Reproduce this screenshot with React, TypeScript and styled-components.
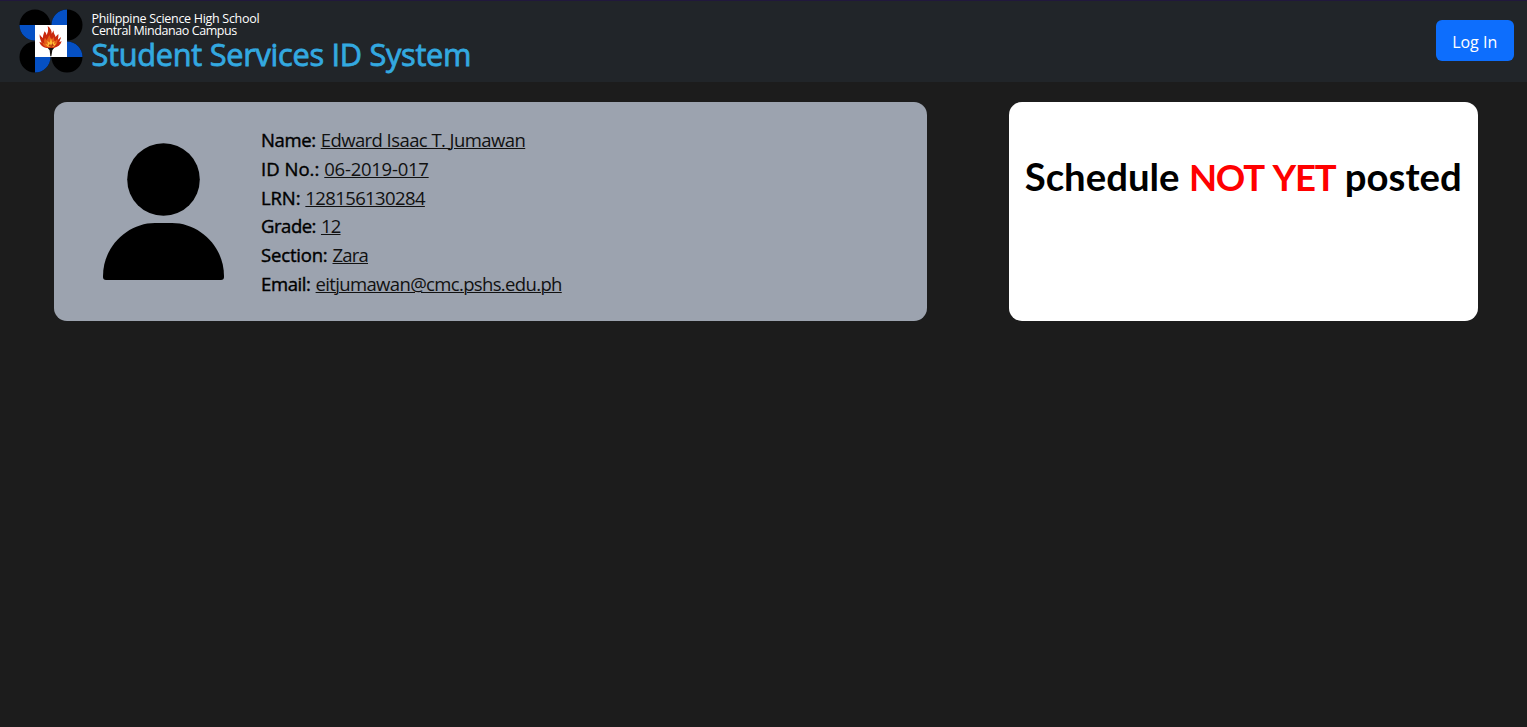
import styled, { createGlobalStyle } from "styled-components";

interface TextProps {
	$spacing?: string;
}

const details = [
	{ label: "Name:", value: "Edward Isaac T. Jumawan", labelSpacing: "-0.4px", valueSpacing: "-0.57px" },
	{ label: "ID No.:", value: "06-2019-017", labelSpacing: "0", valueSpacing: "-0.25px" },
	{ label: "LRN:", value: "128156130284", labelSpacing: "-0.15px", valueSpacing: "-0.62px" },
	{ label: "Grade:", value: "12", labelSpacing: "-0.5px", valueSpacing: "-0.8px" },
	{ label: "Section:", value: "Zara", labelSpacing: "-0.2px", valueSpacing: "-0.8px" },
	{ label: "Email:", value: "eitjumawan@cmc.pshs.edu.ph", labelSpacing: "-0.4px", valueSpacing: "-0.65px" },
];

function Logo() {
	return (
		<LogoSvg viewBox="0 0 192 192">
			<g fill="#000">
				<circle cx="48" cy="48" r="46.5" />
				<circle cx="144" cy="48" r="46.5" />
				<circle cx="48" cy="144" r="46.5" />
				<circle cx="144" cy="144" r="46.5" />
			</g>
			<g fill="#0550c4">
				<path d="M48 48H1.500A46.500 46.500 0 0 0 48 94.500Z" />
				<path d="M144 48V1.500A46.500 46.500 0 0 0 97.500 48Z" />
				<path d="M144 144H190.500A46.500 46.500 0 0 0 144 97.500Z" />
				<path d="M48 144V190.500A46.500 46.500 0 0 0 94.500 144Z" />
			</g>
			<rect x="48" y="48" width="96" height="96" fill="#fff" />
			<path d="M84 115h23l-7 9-3 18h-3l-2-18z" fill="#17120f" />
			<path
				d="M82 117c-10-2-18-8-21-19l7 3c-4-9-7-15-6-25 3 6 6 9 10 11-1-9 4-14 4-20 5 4 6 7 6 12 5-8 7-16 4-28 8 6 13 14 12 23l6-10c-1 11 6 14 5 20l9-9c1 8-1 13-1 17l9-8c-1 6-3 10-5 15l7-2c-3 11-12 18-24 20z"
				fill="#c9290c"
			/>
			<path
				d="M82 115c-7-3-11-8-12-15l7 4c-3-7-2-12 1-18l5 8 8-16 6 14 8-8c-1 7 2 9 1 14l10-8c0 11-6 22-14 25z"
				fill="#e5601a"
			/>
			<path d="M87 113l-8-8 8 2-2-12 7 6 4-14 4 15 7-7-2 10 7-2-8 10z" fill="#ffbd35" />
			<path d="M88 111l5-7 3 6 4-8 5 8-7 4z" fill="#b83a12" />
		</LogoSvg>
	);
}

function Person() {
	return (
		<PersonSvg viewBox="0 0 121 137">
			<circle cx="60.500" cy="36.500" r="36.300" />
			<path d="M0 134V133C0 103 25 80 52 80H69C96 80 121 103 121 133V134Q121 137 118 137H3Q0 137 0 134Z" />
		</PersonSvg>
	);
}

function App() {
	return (
		<Page>
			<GlobalStyle />
			<Header>
				<Brand>
					<Logo />
					<BrandText>
						<School $spacing="-0.3px">Philippine Science High School</School>
						<School $spacing="-0.43px">Central Mindanao Campus</School>
						<Title>Student Services ID System</Title>
					</BrandText>
				</Brand>
				<LoginButton>Log In</LoginButton>
			</Header>
			<Main>
				<StudentCard>
					<Person />
					<Details>
						{details.map((item) => (
							<Row key={item.label}>
								<Label $spacing={item.labelSpacing}>{item.label}</Label>
								<Value $spacing={item.valueSpacing}>{item.value}</Value>
							</Row>
						))}
					</Details>
				</StudentCard>
				<ScheduleCard>
					<Notice>
						<span>Schedule</span>
						<Warning>NOT YET</Warning>
						<span>posted</span>
					</Notice>
				</ScheduleCard>
			</Main>
		</Page>
	);
}

const GlobalStyle = createGlobalStyle`
	* {
		box-sizing: border-box;
	}

	body {
		margin: 0;
		background: #1c1c1c;
		font-family: "Open Sans", "Noto Sans", sans-serif;
	}
`;

const Page = styled.div`
	height: 100vh;
	overflow: hidden;
	background: #1c1c1c;
`;

const Header = styled.header`
	height: 82px;
	padding: 0 13.300px 2px 18.500px;
	display: flex;
	justify-content: space-between;
	align-items: center;
	background: #212529;
	border-top: 1px solid #21183c;
`;

const Brand = styled.div`
	display: flex;
	align-items: center;
`;

const LogoSvg = styled.svg`
	width: 64px;
	height: 64px;
`;

const BrandText = styled.div`
	margin-left: 9px;
	padding-top: 3px;
	display: flex;
	flex-direction: column;
	white-space: nowrap;
`;

const School = styled.span<TextProps>`
	color: #fff;
	font-size: 12.5px;
	line-height: 12px;
	letter-spacing: ${({ $spacing }) => $spacing || "normal"};
`;

const Title = styled.span`
	color: #33a9e0;
	font-size: 30.7px;
	line-height: 35px;
	letter-spacing: -0.27px;
	-webkit-text-stroke: 0.8px #33a9e0;
`;

const LoginButton = styled.button`
	width: 78px;
	height: 41px;
	padding: 2px 0 0;
	border: none;
	border-radius: 6px;
	background: #0d6efd;
	color: #fff;
	font-family: inherit;
	font-size: 16px;
`;

const Main = styled.main`
	padding: 20px 49.300px 0 53.600px;
	display: flex;
	justify-content: space-between;
`;

const Card = styled.section`
	height: 219px;
	border-radius: 13px;
`;

const StudentCard = styled(Card)`
	width: 873px;
	padding: 24px 49.500px 0;
	display: flex;
	background: #9ca3af;
`;

const PersonSvg = styled.svg`
	width: 121px;
	height: 137px;
	margin-top: 17px;
	flex-shrink: 0;
`;

const Details = styled.div`
	margin-left: 37px;
`;

const Row = styled.div`
	height: 28.800px;
	display: flex;
	gap: 5px;
	font-size: 18.500px;
	line-height: 28.800px;
	white-space: nowrap;
`;

const Label = styled.span<TextProps>`
	color: #000;
	letter-spacing: ${({ $spacing }) => $spacing || "normal"};
	-webkit-text-stroke: 0.4px #000;
`;

const Value = styled.span<TextProps>`
	color: #111;
	text-decoration: underline;
	text-decoration-thickness: 1px;
	letter-spacing: ${({ $spacing }) => $spacing || "normal"};
`;

const ScheduleCard = styled(Card)`
	width: 469px;
	padding: 50px 16px 0;
	background: #fff;
`;

const Notice = styled.div`
	display: flex;
	justify-content: space-between;
	align-items: baseline;
	font-family: Lato, sans-serif;
	font-size: 38.300px;
	font-weight: 700;
	line-height: 48px;
	color: #000;
	white-space: nowrap;
`;

const Warning = styled.span`
	font-size: 36.500px;
	letter-spacing: -1.2px;
	word-spacing: 3.500px;
	color: #f00;
`;

export default App;
